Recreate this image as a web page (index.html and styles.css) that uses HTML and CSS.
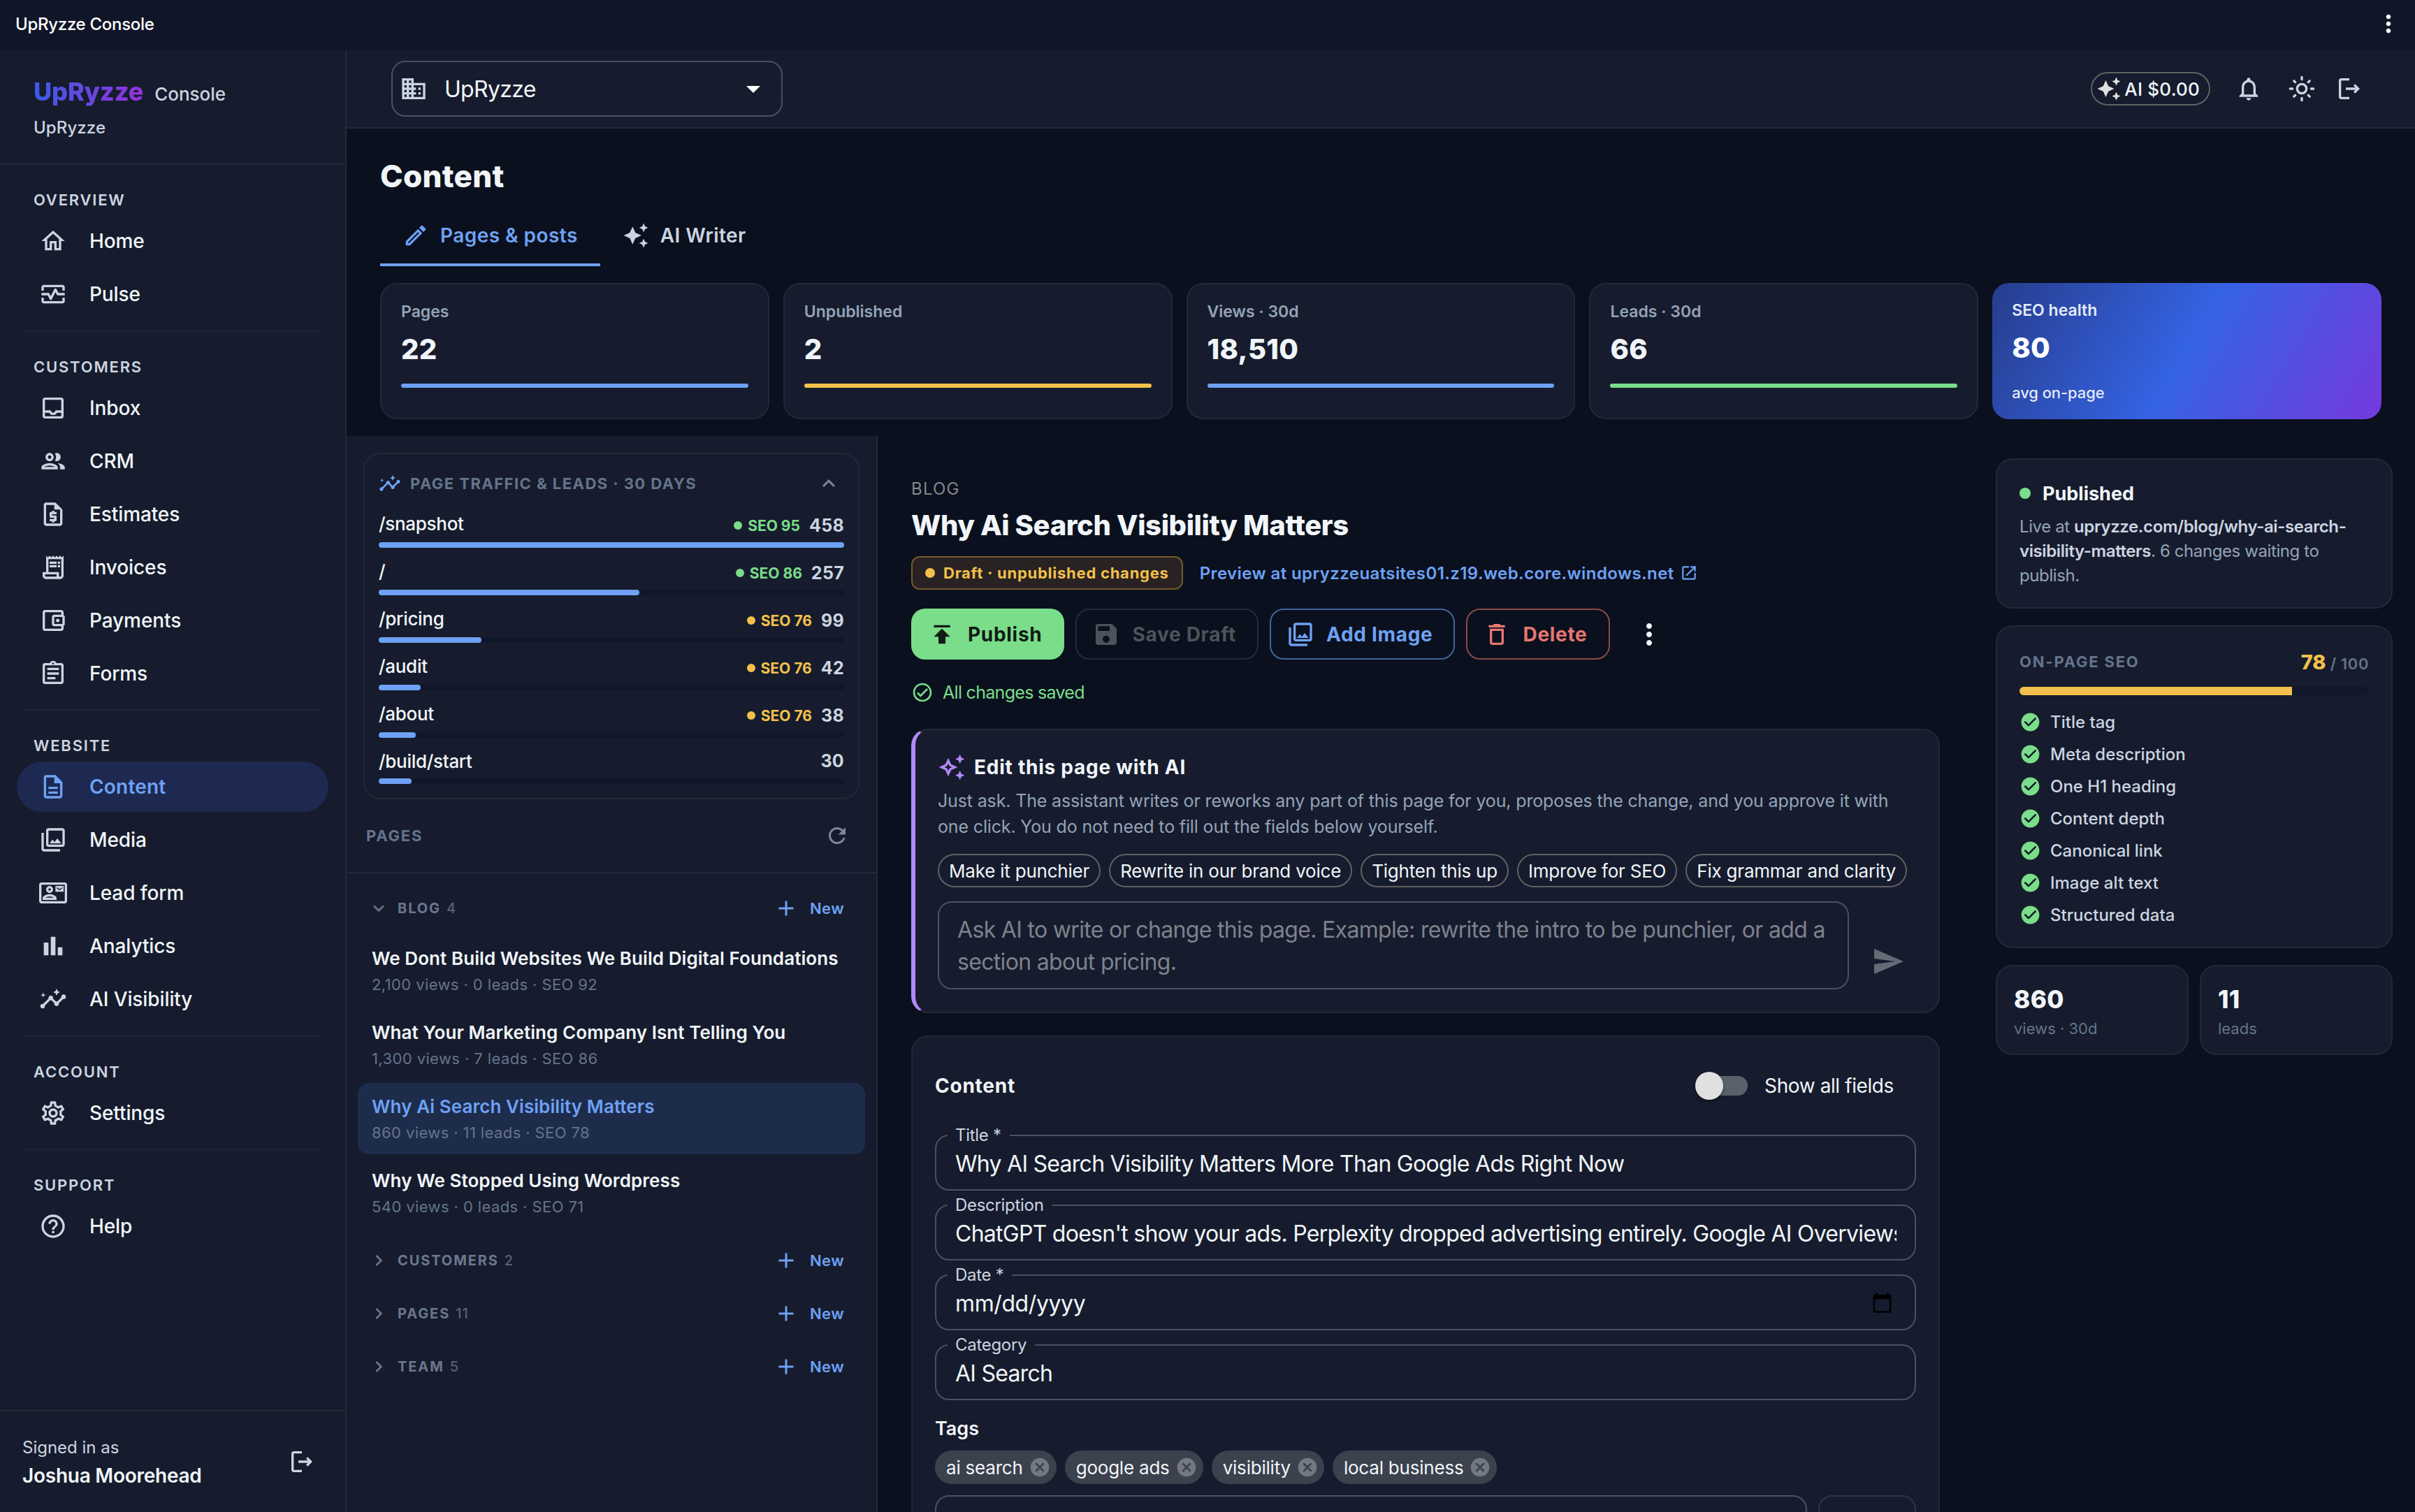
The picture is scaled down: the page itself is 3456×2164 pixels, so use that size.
FILE: index.html
```html
<!DOCTYPE html>
<html lang="en">
<head>
    <meta charset="UTF-8">
    <meta name="viewport" content="width=device-width, initial-scale=1.0">
    <title>UpRyzze Console</title>
    <link rel="stylesheet" href="styles.css">
</head>
<body>

    <!-- icon sprite -->
    <svg class="sprite">
        <symbol id="home" viewBox="0 0 24 24"><path d="M12 5.69l5 4.5V18h-2v-6H9v6H7v-7.81l5-4.5M12 3L2 12h3v8h6v-6h2v6h6v-8h3L12 3z"/></symbol>
        <symbol id="pulse" viewBox="0 0 24 24"><path d="M20 4H4c-1.1 0-2 .9-2 2v3h2V6h16v3h2V6c0-1.1-.9-2-2-2zm0 14H4v-3H2v3c0 1.1.9 2 2 2h16c1.1 0 2-.9 2-2v-3h-2v3z"/><path d="M14.89 7.55c-.34-.68-1.45-.68-1.79 0L10 13.76l-1.11-2.21c-.16-.34-.51-.55-.89-.55H2v2h5.38l1.72 3.45c.18.34.52.55.9.55s.72-.21.89-.55L14 10.24l1.11 2.21c.17.34.51.55.89.55h6v-2h-5.38l-1.73-3.45z"/></symbol>
        <symbol id="inbox" viewBox="0 0 24 24"><path d="M19 3H5c-1.1 0-2 .9-2 2v14c0 1.1.89 2 2 2h14c1.1 0 2-.9 2-2V5c0-1.1-.9-2-2-2zm0 16H5v-3h3.56c.69 1.19 1.97 2 3.45 2s2.75-.81 3.45-2H19v3zm0-5h-4.99c0 1.1-.9 2-2 2s-2-.9-2-2H5V5h14v9z"/></symbol>
        <symbol id="people" viewBox="0 0 24 24"><path d="M9 13.75c-2.34 0-7 1.17-7 3.5V19h14v-1.75c0-2.33-4.66-3.5-7-3.5zM4.34 17c.84-.58 2.87-1.25 4.66-1.25s3.82.67 4.66 1.25H4.34zM9 12c1.93 0 3.5-1.57 3.5-3.5S10.93 5 9 5 5.5 6.57 5.5 8.5 7.07 12 9 12zm0-5c.83 0 1.5.67 1.5 1.5S9.83 10 9 10s-1.5-.67-1.5-1.5S8.17 7 9 7zm7.04 6.81c1.16.84 1.96 1.96 1.96 3.44V19h4v-1.75c0-2.02-3.5-3.17-5.96-3.44zM15 12c1.93 0 3.5-1.57 3.5-3.5S16.93 5 15 5c-.54 0-1.04.13-1.5.35.63.89 1 1.98 1 3.15s-.37 2.26-1 3.15c.46.22.96.35 1.5.35z"/></symbol>
        <symbol id="quote" viewBox="0 0 24 24"><path d="M14 2H6c-1.1 0-1.99.9-1.99 2L4 20c0 1.1.89 2 1.99 2H18c1.1 0 2-.9 2-2V8l-6-6zM6 20V4h7v4h5v12H6zm5-1h2v-1h1c.55 0 1-.45 1-1v-3c0-.55-.45-1-1-1h-3v-1h4v-2h-2V9h-2v1h-1c-.55 0-1 .45-1 1v3c0 .55.45 1 1 1h3v1H9v2h2v1z"/></symbol>
        <symbol id="receipt" viewBox="0 0 24 24"><path d="M19.5 3.5L18 2l-1.5 1.5L15 2l-1.5 1.5L12 2l-1.5 1.5L9 2 7.5 3.5 6 2v14H3v3c0 1.66 1.34 3 3 3h12c1.66 0 3-1.34 3-3V2l-1.5 1.5zM15 20H6c-.55 0-1-.45-1-1v-1h10v2zm4-1c0 .55-.45 1-1 1s-1-.45-1-1v-3H8V5h11v14z"/><path d="M9 7h6v2H9zM16 7h2v2h-2zM9 10h6v2H9zM16 10h2v2h-2z"/></symbol>
        <symbol id="wallet" viewBox="0 0 24 24"><path d="M21 7.28V5c0-1.1-.9-2-2-2H5c-1.11 0-2 .9-2 2v14c0 1.1.89 2 2 2h14c1.1 0 2-.9 2-2v-2.28c.59-.35 1-.98 1-1.72V9c0-.74-.41-1.37-1-1.72zM20 9v6h-7V9h7zM5 19V5h14v2h-6c-1.1 0-2 .9-2 2v6c0 1.1.9 2 2 2h6v2H5z"/><circle cx="16" cy="12" r="1.5"/></symbol>
        <symbol id="forms" viewBox="0 0 24 24"><path d="M7 15h7v2H7zm0-4h10v2H7zm0-4h10v2H7zm12-4h-4.18C14.4 1.84 13.3 1 12 1c-1.3 0-2.4.84-2.82 2H5c-.14 0-.27.01-.4.04-.39.08-.74.28-1.01.55-.18.18-.33.4-.43.64-.1.23-.16.49-.16.77v14c0 .27.06.54.16.78s.25.45.43.64c.27.27.62.47 1.01.55.13.02.26.03.4.03h14c1.1 0 2-.9 2-2V5c0-1.1-.9-2-2-2zm-7-.25c.41 0 .75.34.75.75s-.34.75-.75.75-.75-.34-.75-.75.34-.75.75-.75zM19 19H5V5h14v14z"/></symbol>
        <symbol id="doc" viewBox="0 0 24 24"><path d="M8 16h8v2H8zm0-4h8v2H8zm6-10H6c-1.1 0-2 .9-2 2v16c0 1.1.89 2 1.99 2H18c1.1 0 2-.9 2-2V8l-6-6zm4 18H6V4h7v5h5v11z"/></symbol>
        <symbol id="media" viewBox="0 0 24 24"><path d="M20 4v12H8V4h12m0-2H8c-1.1 0-2 .9-2 2v12c0 1.1.9 2 2 2h12c1.1 0 2-.9 2-2V4c0-1.1-.9-2-2-2zm-8.5 9.67l1.69 2.26 2.48-3.1L19 15H9zM2 6v14c0 1.1.9 2 2 2h14v-2H4V6H2z"/></symbol>
        <symbol id="contact" viewBox="0 0 24 24"><path d="M22 3H2C.9 3 0 3.9 0 5v14c0 1.1.9 2 2 2h20c1.1 0 1.99-.9 1.99-2L24 5c0-1.1-.9-2-2-2zm0 16H2V5h20v14zM21 6h-7v5h7V6zm-1 2l-2.5 1.75L15 8V7l2.5 1.75L20 7v1zM9 12c1.65 0 3-1.35 3-3s-1.35-3-3-3-3 1.35-3 3 1.35 3 3 3zm0-4c.55 0 1 .45 1 1s-.45 1-1 1-1-.45-1-1 .45-1 1-1zm6 8.59c0-2.5-3.97-3.58-6-3.58s-6 1.08-6 3.58V18h12v-1.41zM5.48 16c.74-.5 2.22-1 3.52-1s2.77.49 3.52 1H5.48z"/></symbol>
        <symbol id="bars" viewBox="0 0 24 24"><path d="M4 9h4v11H4zm12 4h4v7h-4zm-6-9h4v16h-4z"/></symbol>
        <symbol id="insights" viewBox="0 0 24 24"><path d="M21 8c-1.45 0-2.26 1.44-1.93 2.51l-3.55 3.56c-.3-.09-.74-.09-1.04 0l-2.55-2.55C12.27 10.45 11.46 9 10 9c-1.45 0-2.27 1.44-1.93 2.52l-4.56 4.55C2.44 15.74 1 16.55 1 18c0 1.1.9 2 2 2 1.45 0 2.26-1.44 1.93-2.51l4.55-4.56c.3.09.74.09 1.04 0l2.55 2.55C12.73 16.55 13.54 18 15 18c1.45 0 2.27-1.44 1.93-2.52l3.56-3.55C21.56 12.26 23 11.45 23 10c0-1.1-.9-2-2-2z"/><path d="M15 9l.94-2.07L18 6l-2.06-.93L15 3l-.92 2.07L12 6l2.08.93zM3.5 11L4 9l2-.5L4 8l-.5-2L3 8l-2 .5L3 9z"/></symbol>
        <symbol id="settings" viewBox="0 0 24 24"><path d="M19.43 12.98c.04-.32.07-.64.07-.98 0-.34-.03-.66-.07-.98l2.11-1.65c.19-.15.24-.42.12-.64l-2-3.46c-.09-.16-.26-.25-.44-.25-.06 0-.12.01-.17.03l-2.49 1c-.52-.4-1.08-.73-1.69-.98l-.38-2.65C14.46 2.18 14.25 2 14 2h-4c-.25 0-.46.18-.49.42l-.38 2.65c-.61.25-1.17.59-1.69.98l-2.49-1c-.06-.02-.12-.03-.18-.03-.17 0-.34.09-.43.25l-2 3.46c-.13.22-.07.49.12.64l2.11 1.65c-.04.32-.07.65-.07.98 0 .33.03.66.07.98l-2.11 1.65c-.19.15-.24.42-.12.64l2 3.46c.09.16.26.25.44.25.06 0 .12-.01.17-.03l2.49-1c.52.4 1.08.73 1.69.98l.38 2.65c.03.24.24.42.49.42h4c.25 0 .46-.18.49-.42l.38-2.65c.61-.25 1.17-.59 1.69-.98l2.49 1c.06.02.12.03.18.03.17 0 .34-.09.43-.25l2-3.46c.12-.22.07-.49-.12-.64l-2.11-1.65zm-1.98-1.71c.04.31.05.52.05.73 0 .21-.02.43-.05.73l-.14 1.13.89.7 1.08.84-.7 1.21-1.27-.51-1.04-.42-.9.68c-.43.32-.84.56-1.25.73l-1.06.43-.16 1.13-.2 1.35h-1.4l-.19-1.35-.16-1.13-1.06-.43c-.43-.18-.83-.41-1.23-.71l-.91-.7-1.06.43-1.27.51-.7-1.21 1.08-.84.89-.7-.14-1.13c-.03-.31-.05-.54-.05-.74s.02-.43.05-.73l.14-1.13-.89-.7-1.08-.84.7-1.21 1.27.51 1.04.42.9-.68c.43-.32.84-.56 1.25-.73l1.06-.43.16-1.13.2-1.35h1.39l.19 1.35.16 1.13 1.06.43c.43.18.83.41 1.23.71l.91.7 1.06-.43 1.27-.51.7 1.21-1.07.85-.89.7.14 1.13zM12 8c-2.21 0-4 1.79-4 4s1.79 4 4 4 4-1.79 4-4-1.79-4-4-4zm0 6c-1.1 0-2-.9-2-2s.9-2 2-2 2 .9 2 2-.9 2-2 2z"/></symbol>
        <symbol id="help" viewBox="0 0 24 24"><path d="M11 18h2v-2h-2v2zm1-16C6.48 2 2 6.48 2 12s4.48 10 10 10 10-4.48 10-10S17.52 2 12 2zm0 18c-4.41 0-8-3.59-8-8s3.59-8 8-8 8 3.59 8 8-3.59 8-8 8zm0-14c-2.21 0-4 1.79-4 4h2c0-1.1.9-2 2-2s2 .9 2 2c0 2-3 1.75-3 5h2c0-2.25 3-2.5 3-5 0-2.21-1.79-4-4-4z"/></symbol>
        <symbol id="logout" viewBox="0 0 24 24"><path d="M17 8l-1.41 1.41L17.17 11H9v2h8.17l-1.58 1.58L17 16l4-4-4-4zM5 5h7V3H5c-1.1 0-2 .9-2 2v14c0 1.1.9 2 2 2h7v-2H5V5z"/></symbol>
        <symbol id="business" viewBox="0 0 24 24"><path d="M12 7V3H2v18h20V7H12zM6 19H4v-2h2v2zm0-4H4v-2h2v2zm0-4H4V9h2v2zm0-4H4V5h2v2zm4 12H8v-2h2v2zm0-4H8v-2h2v2zm0-4H8V9h2v2zm0-4H8V5h2v2zm10 12h-8v-2h2v-2h-2v-2h2v-2h-2V9h8v10zm-2-8h-2v2h2v-2zm0 4h-2v2h2v-2z"/></symbol>
        <symbol id="sparkle" viewBox="0 0 24 24"><path d="M19 9l1.25-2.75L23 5l-2.75-1.25L19 1l-1.25 2.75L15 5l2.75 1.25L19 9zm-7.5.5L9 4 6.5 9.5 1 12l5.5 2.5L9 20l2.5-5.5L17 12l-5.5-2.5zM19 15l-1.25 2.75L15 19l2.75 1.25L19 23l1.25-2.75L23 19l-2.75-1.25L19 15z"/></symbol>
        <symbol id="sparkle-outline" viewBox="0 0 24 24"><path d="M19 9l1.25-2.75L23 5l-2.75-1.25L19 1l-1.25 2.75L15 5l2.75 1.25L19 9zm0 6l-1.25 2.75L15 19l2.75 1.25L19 23l1.25-2.75L23 19l-2.75-1.25L19 15zm-7.5-5.5L9 4 6.5 9.5 1 12l5.5 2.5L9 20l2.5-5.5L17 12l-5.5-2.5zm-1.51 3.49L9 15.17l-.99-2.18L5.83 12l2.18-.99L9 8.83l.99 2.18 2.18.99-2.18.99z"/></symbol>
        <symbol id="edit" viewBox="0 0 24 24"><path d="M14.06 9.02l.92.92L5.92 19H5v-.92l9.06-9.06M17.66 3c-.25 0-.51.1-.7.29l-1.83 1.83 3.75 3.75 1.83-1.83c.39-.39.39-1.02 0-1.41l-2.34-2.34c-.2-.2-.45-.29-.71-.29zm-3.6 3.19L3 17.25V21h3.75L17.81 9.94l-3.75-3.75z"/></symbol>
        <symbol id="bell" viewBox="0 0 24 24"><path d="M12 22c1.1 0 2-.9 2-2h-4c0 1.1.9 2 2 2zm6-6v-5c0-3.07-1.63-5.64-4.5-6.32V4c0-.83-.67-1.5-1.5-1.5s-1.5.67-1.5 1.5v.68C7.64 5.36 6 7.92 6 11v5l-2 2v1h16v-1l-2-2zm-2 1H8v-6c0-2.48 1.51-4.5 4-4.5s4 2.02 4 4.5v6z"/></symbol>
        <symbol id="sun" viewBox="0 0 24 24"><g fill="none" stroke="currentColor" stroke-width="2" stroke-linecap="round"><circle cx="12" cy="12" r="4"/><path d="M12 2v2M12 20v2M2 12h2M20 12h2M5.3 5.3l1.1 1.1M17.6 17.6l1.1 1.1M5.3 18.7l1.1-1.1M17.6 6.4l1.1-1.1"/></g></symbol>
        <symbol id="caret" viewBox="0 0 24 24"><path d="M7 10l5 5 5-5z"/></symbol>
        <symbol id="up" viewBox="0 0 24 24"><path d="M12 8l-6 6 1.41 1.41L12 10.83l4.59 4.58L18 14z"/></symbol>
        <symbol id="down" viewBox="0 0 24 24"><path d="M16.59 8.59L12 13.17 7.41 8.59 6 10l6 6 6-6z"/></symbol>
        <symbol id="right" viewBox="0 0 24 24"><path d="M10 6L8.59 7.41 13.17 12l-4.58 4.59L10 18l6-6z"/></symbol>
        <symbol id="refresh" viewBox="0 0 24 24"><path d="M17.65 6.35C16.2 4.9 14.21 4 12 4c-4.42 0-7.99 3.58-7.99 8s3.57 8 7.99 8c3.73 0 6.84-2.55 7.73-6h-2.08c-.82 2.33-3.04 4-5.65 4-3.31 0-6-2.69-6-6s2.69-6 6-6c1.66 0 3.14.69 4.22 1.78L13 11h7V4l-2.35 2.35z"/></symbol>
        <symbol id="plus" viewBox="0 0 24 24"><path d="M19 13h-6v6h-2v-6H5v-2h6V5h2v6h6v2z"/></symbol>
        <symbol id="publish" viewBox="0 0 24 24"><path d="M5 4v2h14V4H5zm0 10h4v6h6v-6h4l-7-7-7 7z"/></symbol>
        <symbol id="save" viewBox="0 0 24 24"><path d="M17 3H5c-1.11 0-2 .9-2 2v14c0 1.1.89 2 2 2h14c1.1 0 2-.9 2-2V7l-4-4zm-5 16c-1.66 0-3-1.34-3-3s1.34-3 3-3 3 1.34 3 3-1.34 3-3 3zm3-10H5V5h10v4z"/></symbol>
        <symbol id="trash" viewBox="0 0 24 24"><path d="M6 19c0 1.1.9 2 2 2h8c1.1 0 2-.9 2-2V7H6v12zM8 9h8v10H8V9zm7.5-5l-1-1h-5l-1 1H5v2h14V4h-3.5z"/></symbol>
        <symbol id="more" viewBox="0 0 24 24"><path d="M12 8c1.1 0 2-.9 2-2s-.9-2-2-2-2 .9-2 2 .9 2 2 2zm0 2c-1.1 0-2 .9-2 2s.9 2 2 2 2-.9 2-2-.9-2-2-2zm0 6c-1.1 0-2 .9-2 2s.9 2 2 2 2-.9 2-2-.9-2-2-2z"/></symbol>
        <symbol id="open" viewBox="0 0 24 24"><path d="M19 19H5V5h7V3H5c-1.11 0-2 .9-2 2v14c0 1.1.89 2 2 2h14c1.1 0 2-.9 2-2v-7h-2v7zM14 3v2h3.59l-9.83 9.83 1.41 1.41L19 6.41V10h2V3h-7z"/></symbol>
        <symbol id="check-outline" viewBox="0 0 24 24"><path d="M16.59 7.58L10 14.17l-2.59-2.58L6 13l4 4 8-8zM12 2C6.48 2 2 6.48 2 12s4.48 10 10 10 10-4.48 10-10S17.52 2 12 2zm0 18c-4.42 0-8-3.58-8-8s3.58-8 8-8 8 3.58 8 8-3.58 8-8 8z"/></symbol>
        <symbol id="check" viewBox="0 0 24 24"><path d="M12 2C6.48 2 2 6.48 2 12s4.48 10 10 10 10-4.48 10-10S17.52 2 12 2zM9.29 16.29L5.7 12.7c-.39-.39-.39-1.02 0-1.41.39-.39 1.02-.39 1.41 0L10 14.17l6.88-6.88c.39-.39 1.02-.39 1.41 0 .39.39.39 1.02 0 1.41l-7.59 7.59c-.38.39-1.02.39-1.41 0z"/></symbol>
        <symbol id="send" viewBox="0 0 24 24"><path d="M2.01 21L23 12 2.01 3 2 10l15 2-15 2z"/></symbol>
        <symbol id="cancel" viewBox="0 0 24 24"><path d="M12 2C6.47 2 2 6.47 2 12s4.47 10 10 10 10-4.47 10-10S17.53 2 12 2zm5 13.59L15.59 17 12 13.41 8.41 17 7 15.59 10.59 12 7 8.41 8.41 7 12 10.59 15.59 7 17 8.41 13.41 12 17 15.59z"/></symbol>
        <symbol id="calendar" viewBox="0 0 24 24"><path d="M20 3h-1V1h-2v2H7V1H5v2H4c-1.1 0-2 .9-2 2v16c0 1.1.9 2 2 2h16c1.1 0 2-.9 2-2V5c0-1.1-.9-2-2-2zm0 18H4V8h16v13z"/></symbol>
    </svg>

    <div class="titlebar">
        <span>UpRyzze Console</span>
        <svg class="icon"><use href="#more"/></svg>
    </div>

    <div class="app">
        <aside class="sidebar">
            <div class="brand">
                <div class="brand-row"><span class="logo">UpRyzze</span><span class="console">Console</span></div>
                <div class="tenant">UpRyzze</div>
            </div>

            <nav class="nav">
                <div class="nav-group">
                    <div class="nav-label">OVERVIEW</div>
                    <a class="nav-item"><svg class="icon"><use href="#home"/></svg>Home</a>
                    <a class="nav-item"><svg class="icon"><use href="#pulse"/></svg>Pulse</a>
                </div>
                <div class="nav-group">
                    <div class="nav-label">CUSTOMERS</div>
                    <a class="nav-item"><svg class="icon"><use href="#inbox"/></svg>Inbox</a>
                    <a class="nav-item"><svg class="icon"><use href="#people"/></svg>CRM</a>
                    <a class="nav-item"><svg class="icon"><use href="#quote"/></svg>Estimates</a>
                    <a class="nav-item"><svg class="icon"><use href="#receipt"/></svg>Invoices</a>
                    <a class="nav-item"><svg class="icon"><use href="#wallet"/></svg>Payments</a>
                    <a class="nav-item"><svg class="icon"><use href="#forms"/></svg>Forms</a>
                </div>
                <div class="nav-group">
                    <div class="nav-label">WEBSITE</div>
                    <a class="nav-item active"><svg class="icon"><use href="#doc"/></svg>Content</a>
                    <a class="nav-item"><svg class="icon"><use href="#media"/></svg>Media</a>
                    <a class="nav-item"><svg class="icon"><use href="#contact"/></svg>Lead form</a>
                    <a class="nav-item"><svg class="icon"><use href="#bars"/></svg>Analytics</a>
                    <a class="nav-item"><svg class="icon"><use href="#insights"/></svg>AI Visibility</a>
                </div>
                <div class="nav-group">
                    <div class="nav-label">ACCOUNT</div>
                    <a class="nav-item"><svg class="icon"><use href="#settings"/></svg>Settings</a>
                </div>
                <div class="nav-group">
                    <div class="nav-label">SUPPORT</div>
                    <a class="nav-item"><svg class="icon"><use href="#help"/></svg>Help</a>
                </div>
            </nav>

            <div class="user">
                <div>
                    <div class="user-hint">Signed in as</div>
                    <div class="user-name">Joshua Moorehead</div>
                </div>
                <svg class="icon"><use href="#logout"/></svg>
            </div>
        </aside>

        <div class="page">
            <header class="topbar">
                <div class="site-select">
                    <svg class="icon"><use href="#business"/></svg>
                    <span>UpRyzze</span>
                    <svg class="icon caret"><use href="#caret"/></svg>
                </div>
                <div class="topbar-actions">
                    <div class="cost"><svg class="icon"><use href="#sparkle"/></svg>AI $0.00</div>
                    <svg class="icon bell"><use href="#bell"/></svg>
                    <svg class="icon sun"><use href="#sun"/></svg>
                    <svg class="icon"><use href="#logout"/></svg>
                </div>
            </header>

            <section class="head">
                <h1>Content</h1>
                <div class="tabs">
                    <a class="tab active"><svg class="icon"><use href="#edit"/></svg>Pages &amp; posts</a>
                    <a class="tab"><svg class="icon"><use href="#sparkle"/></svg>AI Writer</a>
                </div>
                <div class="stats">
                    <div class="stat"><div class="stat-label">Pages</div><div class="stat-value">22</div><div class="stat-bar blue"></div></div>
                    <div class="stat"><div class="stat-label">Unpublished</div><div class="stat-value">2</div><div class="stat-bar amber"></div></div>
                    <div class="stat"><div class="stat-label">Views · 30d</div><div class="stat-value">18,510</div><div class="stat-bar blue"></div></div>
                    <div class="stat"><div class="stat-label">Leads · 30d</div><div class="stat-value">66</div><div class="stat-bar green"></div></div>
                    <div class="stat health"><div class="stat-label">SEO health</div><div class="stat-value">80</div><div class="stat-note">avg on-page</div></div>
                </div>
            </section>

            <div class="workspace">
                <div class="pages-panel">
                    <div class="traffic">
                        <div class="traffic-head">
                            <svg class="icon"><use href="#insights"/></svg>
                            <span>PAGE TRAFFIC &amp; LEADS · 30 DAYS</span>
                            <svg class="icon toggle"><use href="#up"/></svg>
                        </div>
                        <div class="traffic-row">
                            <div class="traffic-line"><span class="path">/snapshot</span><span class="seo good">SEO 95</span><b>458</b></div>
                            <div class="meter"><i style="width: 100%"></i></div>
                        </div>
                        <div class="traffic-row">
                            <div class="traffic-line"><span class="path">/</span><span class="seo good">SEO 86</span><b>257</b></div>
                            <div class="meter"><i style="width: 56%"></i></div>
                        </div>
                        <div class="traffic-row">
                            <div class="traffic-line"><span class="path">/pricing</span><span class="seo warn">SEO 76</span><b>99</b></div>
                            <div class="meter"><i style="width: 22%"></i></div>
                        </div>
                        <div class="traffic-row">
                            <div class="traffic-line"><span class="path">/audit</span><span class="seo warn">SEO 76</span><b>42</b></div>
                            <div class="meter"><i style="width: 9%"></i></div>
                        </div>
                        <div class="traffic-row">
                            <div class="traffic-line"><span class="path">/about</span><span class="seo warn">SEO 76</span><b>38</b></div>
                            <div class="meter"><i style="width: 8%"></i></div>
                        </div>
                        <div class="traffic-row plain">
                            <div class="traffic-line"><span class="path">/build/start</span><b>30</b></div>
                            <div class="meter"><i style="width: 7%"></i></div>
                        </div>
                    </div>

                    <div class="panel-head"><span>PAGES</span><svg class="icon"><use href="#refresh"/></svg></div>

                    <div class="groups">
                        <div class="group"><svg class="icon"><use href="#down"/></svg><span>BLOG</span><em>4</em><a class="new"><svg class="icon"><use href="#plus"/></svg>New</a></div>
                        <div class="post"><div class="post-title">We Dont Build Websites We Build Digital Foundations</div><div class="post-meta">2,100 views · 0 leads · SEO 92</div></div>
                        <div class="post"><div class="post-title">What Your Marketing Company Isnt Telling You</div><div class="post-meta">1,300 views · 7 leads · SEO 86</div></div>
                        <div class="post active"><div class="post-title">Why Ai Search Visibility Matters</div><div class="post-meta">860 views · 11 leads · SEO 78</div></div>
                        <div class="post"><div class="post-title">Why We Stopped Using Wordpress</div><div class="post-meta">540 views · 0 leads · SEO 71</div></div>
                        <div class="group closed-first"><svg class="icon"><use href="#right"/></svg><span>CUSTOMERS</span><em>2</em><a class="new"><svg class="icon"><use href="#plus"/></svg>New</a></div>
                        <div class="group"><svg class="icon"><use href="#right"/></svg><span>PAGES</span><em>11</em><a class="new"><svg class="icon"><use href="#plus"/></svg>New</a></div>
                        <div class="group"><svg class="icon"><use href="#right"/></svg><span>TEAM</span><em>5</em><a class="new"><svg class="icon"><use href="#plus"/></svg>New</a></div>
                    </div>
                </div>

                <main class="editor">
                    <div class="overline">BLOG</div>
                    <h2>Why Ai Search Visibility Matters</h2>
                    <div class="status-row">
                        <span class="draft">Draft · unpublished changes</span>
                        <a class="preview">Preview at upryzzeuatsites01.z19.web.core.windows.net<svg class="icon"><use href="#open"/></svg></a>
                    </div>
                    <div class="actions">
                        <button class="btn publish"><svg class="icon"><use href="#publish"/></svg>Publish</button>
                        <button class="btn save"><svg class="icon"><use href="#save"/></svg>Save Draft</button>
                        <button class="btn image"><svg class="icon"><use href="#media"/></svg>Add Image</button>
                        <button class="btn delete"><svg class="icon"><use href="#trash"/></svg>Delete</button>
                        <svg class="icon more"><use href="#more"/></svg>
                    </div>
                    <div class="saved"><svg class="icon"><use href="#check-outline"/></svg>All changes saved</div>

                    <div class="card ai">
                        <div class="ai-title"><svg class="icon"><use href="#sparkle-outline"/></svg>Edit this page with AI</div>
                        <p>Just ask. The assistant writes or reworks any part of this page for you, proposes the change, and you approve it with<br>one click. You do not need to fill out the fields below yourself.</p>
                        <div class="chips">
                            <span class="chip">Make it punchier</span>
                            <span class="chip">Rewrite in our brand voice</span>
                            <span class="chip">Tighten this up</span>
                            <span class="chip">Improve for SEO</span>
                            <span class="chip">Fix grammar and clarity</span>
                        </div>
                        <div class="ask">
                            <div class="ask-box">Ask AI to write or change this page. Example: rewrite the intro to be punchier, or add a<br>section about pricing.</div>
                            <div class="send"><svg class="icon"><use href="#send"/></svg></div>
                        </div>
                    </div>

                    <div class="card form">
                        <div class="form-head">
                            <span class="form-title">Content</span>
                            <span class="switch"></span>
                            <span class="switch-label">Show all fields</span>
                        </div>
                        <fieldset><legend>Title *</legend><div class="value">Why AI Search Visibility Matters More Than Google Ads Right Now</div></fieldset>
                        <fieldset><legend>Description</legend><div class="value">ChatGPT doesn't show your ads. Perplexity dropped advertising entirely. Google AI Overviews</div></fieldset>
                        <fieldset><legend>Date *</legend><div class="value date">mm/dd/yyyy<svg class="icon"><use href="#calendar"/></svg></div></fieldset>
                        <fieldset><legend>Category</legend><div class="value">AI Search</div></fieldset>
                        <div class="tags-label">Tags</div>
                        <div class="tags">
                            <span class="tag">ai search<svg class="icon"><use href="#cancel"/></svg></span>
                            <span class="tag">google ads<svg class="icon"><use href="#cancel"/></svg></span>
                            <span class="tag">visibility<svg class="icon"><use href="#cancel"/></svg></span>
                            <span class="tag">local business<svg class="icon"><use href="#cancel"/></svg></span>
                        </div>
                        <div class="tag-entry"><div class="tag-input"></div><div class="tag-add"></div></div>
                    </div>
                </main>

                <aside class="rail">
                    <div class="card live">
                        <div class="live-title">Published</div>
                        <p>Live at <b>upryzze.com/blog/why-ai-search-<br>visibility-matters</b>. 6 changes waiting to<br>publish.</p>
                    </div>
                    <div class="card score">
                        <div class="score-head"><span>ON-PAGE SEO</span><span class="total"><b>78</b> / 100</span></div>
                        <div class="score-bar"><i style="width: 78%"></i></div>
                        <ul>
                            <li><svg class="icon"><use href="#check"/></svg>Title tag</li>
                            <li><svg class="icon"><use href="#check"/></svg>Meta description</li>
                            <li><svg class="icon"><use href="#check"/></svg>One H1 heading</li>
                            <li><svg class="icon"><use href="#check"/></svg>Content depth</li>
                            <li><svg class="icon"><use href="#check"/></svg>Canonical link</li>
                            <li><svg class="icon"><use href="#check"/></svg>Image alt text</li>
                            <li><svg class="icon"><use href="#check"/></svg>Structured data</li>
                        </ul>
                    </div>
                    <div class="minis">
                        <div class="card mini"><b>860</b><span>views · 30d</span></div>
                        <div class="card mini"><b>11</b><span>leads</span></div>
                    </div>
                </aside>
            </div>
        </div>
    </div>

</body>
</html>
```
FILE: styles.css
```css
:root {
    --bg: #0a101d;
    --paper: #161c2d;
    --line: #222835;
    --text: #f1f5f9;
    --soft: #cbd5e1;
    --muted: #94a3b8;
    --faint: #64748b;
    --blue: #6ea1f5;
    --green: #7add8a;
    --amber: #f3c04b;
    --red: #e77672;
    --purple: #b388f9;
}
* {
    box-sizing: border-box;
}
body {
    margin: 0;
    height: 2164px;
    overflow: hidden;
    display: flex;
    flex-direction: column;
    background: var(--bg);
    color: var(--text);
    font-family: Inter, "Liberation Sans", sans-serif;
    font-size: 28px;
}
h1, h2, p, ul, fieldset {
    margin: 0;
    padding: 0;
}
.sprite {
    display: none;
}
.icon {
    width: 40px;
    height: 40px;
    fill: currentColor;
    flex: none;
    display: block;
}

/* window bar */
.titlebar {
    height: 72px;
    flex: none;
    display: flex;
    align-items: center;
    justify-content: space-between;
    padding: 0 18px 4px 22px;
    background: #101628;
    color: #fff;
    font-size: 24px;
    font-weight: 500;
    letter-spacing: -0.3px;
}
.app {
    flex: 1;
    min-height: 0;
    display: flex;
}

/* sidebar */
.sidebar {
    width: 496px;
    flex: none;
    display: flex;
    flex-direction: column;
    background: var(--paper);
    border-right: 2px solid var(--line);
}
.brand {
    height: 164px;
    padding: 35px 48px 0;
    border-bottom: 2px solid var(--line);
}
.brand-row {
    display: flex;
    align-items: baseline;
    gap: 16px;
    line-height: 48px;
}
.logo {
    font-size: 36px;
    font-weight: 800;
    letter-spacing: -0.1px;
    background: linear-gradient(90deg, #3b5be6, #9333dd);
    -webkit-background-clip: text;
    background-clip: text;
    color: transparent;
}
.console, .tenant {
    font-size: 26px;
    font-weight: 500;
    color: var(--soft);
}
.tenant {
    font-size: 24px;
    line-height: 40px;
    margin-top: 4px;
    letter-spacing: 0.1px;
}
.nav {
    flex: 1;
    padding: 0 24px;
}
.nav-group + .nav-group::before {
    content: "";
    display: block;
    height: 2px;
    margin: 15.5px 8px 0;
    background: #1d2333;
}
.nav-label {
    padding: 34px 24px 7px;
    line-height: 32px;
    font-size: 22px;
    font-weight: 600;
    letter-spacing: 1.8px;
    color: var(--soft);
}
.nav-item {
    display: flex;
    align-items: center;
    gap: 32px;
    height: 72px;
    padding: 0 32px;
    border-radius: 36px;
    font-weight: 500;
    letter-spacing: -0.1px;
}
.nav-item + .nav-item {
    margin-top: 4px;
}
.nav-item .icon {
    color: var(--soft);
}
.nav-item.active {
    background: #1d2950;
    color: var(--blue);
    font-weight: 600;
    letter-spacing: 0.2px;
}
.nav-item.active .icon {
    color: var(--blue);
}
.user {
    height: 146px;
    display: flex;
    align-items: center;
    justify-content: space-between;
    padding: 0 42px 0 32px;
    border-top: 2px solid var(--line);
}
.user-hint {
    font-size: 24px;
    line-height: 40px;
    color: var(--soft);
}
.user-name {
    line-height: 40px;
    font-weight: 600;
    letter-spacing: -0.25px;
}
.user .icon {
    color: var(--soft);
}

/* top bar */
.page {
    flex: 1;
    min-width: 0;
    display: flex;
    flex-direction: column;
}
.topbar {
    height: 112px;
    flex: none;
    display: flex;
    align-items: center;
    justify-content: space-between;
    padding: 0 74px 0 64px;
    background: var(--paper);
    border-bottom: 2px solid var(--line);
}
.site-select {
    width: 560px;
    height: 80px;
    display: flex;
    align-items: center;
    padding: 0 20px 0 10px;
    border: 2px solid #4a505e;
    border-radius: 20px;
    font-size: 32px;
    letter-spacing: -0.7px;
}
.site-select .icon {
    color: var(--soft);
}
.site-select span {
    flex: 1;
    margin-left: 24px;
}
.site-select .caret {
    width: 48px;
    height: 48px;
    margin-right: -4px;
    color: #fff;
}
.topbar-actions {
    display: flex;
    align-items: center;
    color: var(--soft);
}
.cost {
    height: 48px;
    display: flex;
    align-items: center;
    gap: 4px;
    padding: 0 13px 0 6px;
    margin-right: 35px;
    border: 2px solid #616161;
    border-radius: 24px;
    font-size: 26px;
    font-weight: 500;
    letter-spacing: 0.2px;
    color: var(--text);
}
.cost .icon {
    width: 36px;
    height: 36px;
    color: #e0e0e0;
}
.bell {
    margin-right: 36px;
}
.sun {
    margin-right: 28px;
}

/* page head */
.head {
    height: 440px;
    flex: none;
    padding: 40px 48px 0;
}
h1 {
    font-size: 44px;
    font-weight: 800;
    line-height: 56px;
    letter-spacing: 0.3px;
}
.tabs {
    display: flex;
    margin-top: 14px;
}
.tab {
    height: 87px;
    display: flex;
    align-items: center;
    gap: 16px;
    padding: 3px 32px 0;
    color: var(--soft);
    font-weight: 600;
    letter-spacing: 0.45px;
    border-bottom: 4px solid transparent;
}
.tab .icon {
    width: 38px;
    height: 38px;
}
.tab.active {
    color: var(--blue);
    border-color: var(--blue);
}
.stats {
    display: grid;
    grid-template-columns: repeat(5, 1fr);
    gap: 20px;
    margin-top: 24px;
}
.stat {
    height: 195px;
    padding: 22px 28px 0;
    background: var(--paper);
    border: 2px solid var(--line);
    border-radius: 24px;
}
.stat-label {
    font-size: 23px;
    font-weight: 600;
    line-height: 34px;
    color: var(--muted);
}
.stat-value {
    font-size: 40px;
    font-weight: 800;
    line-height: 48px;
    letter-spacing: 0.3px;
    margin-top: 13px;
}
.stat-bar {
    height: 6px;
    margin-top: 25px;
    border-radius: 3px;
}
.blue {
    background: var(--blue);
}
.amber {
    background: var(--amber);
}
.green {
    background: var(--green);
}
.health {
    border: 0;
    background: linear-gradient(120deg, #263d8c, #3563e4 50%, #7539dd);
}
.health .stat-label, .health .stat-note {
    color: #e3e9f8;
}
.health .stat-value {
    color: #fff;
}
.stat-note {
    margin-top: 24px;
    font-size: 22px;
    font-weight: 500;
    line-height: 32px;
    letter-spacing: -0.1px;
}

/* page list */
.workspace {
    flex: 1;
    min-height: 0;
    display: flex;
    align-items: flex-start;
}
.pages-panel {
    width: 760px;
    height: 1540px;
    flex: none;
    background: var(--paper);
    border-right: 2px solid var(--line);
    padding-top: 24px;
}
.traffic {
    height: 496px;
    margin: 0 24px;
    padding: 20px 20px 0;
    border: 2px solid var(--line);
    border-radius: 24px;
}
.traffic-head {
    height: 44px;
    display: flex;
    align-items: center;
    margin-bottom: 19px;
    font-size: 22px;
    font-weight: 700;
    letter-spacing: 1.45px;
    color: var(--faint);
}
.traffic-head .icon {
    width: 32px;
    height: 32px;
    color: var(--blue);
}
.traffic-head span {
    flex: 1;
    margin-left: 13px;
}
.traffic-head .toggle {
    width: 36px;
    height: 36px;
    margin-right: 4px;
    color: #7b879b;
}
.traffic-row {
    height: 68px;
}
.traffic-line {
    display: flex;
    align-items: center;
    height: 34px;
    margin-bottom: 9px;
}
.plain .traffic-line {
    height: 32px;
}
.path {
    flex: 1;
    padding-bottom: 2px;
    font-size: 26px;
    font-weight: 500;
    letter-spacing: -0.3px;
}
.plain .path {
    padding-bottom: 0;
}
.seo {
    display: flex;
    align-items: center;
    gap: 8px;
    padding-top: 4px;
    font-size: 21px;
    font-weight: 700;
}
.seo::before {
    content: "";
    width: 12px;
    height: 12px;
    border-radius: 50%;
    background: currentColor;
}
.good {
    color: var(--green);
}
.warn {
    color: var(--amber);
}
.traffic-line b {
    margin-left: 13px;
    padding-top: 4px;
    font-size: 25px;
    font-weight: 700;
    letter-spacing: 0.3px;
    color: var(--soft);
}
.plain b {
    padding-top: 0;
}
.meter {
    height: 8px;
    border-radius: 4px;
    background: #11172a;
}
.meter i {
    display: block;
    height: 8px;
    border-radius: 4px;
    background: var(--blue);
}
.panel-head {
    height: 106px;
    display: flex;
    align-items: center;
    justify-content: space-between;
    padding: 0 38px 0 28px;
    border-bottom: 2px solid var(--line);
    font-size: 22px;
    font-weight: 700;
    letter-spacing: 1.8px;
    color: var(--faint);
}
.panel-head .icon {
    width: 36px;
    height: 36px;
    color: #7b879b;
}
.groups {
    padding: 12px 16px 0;
}
.group {
    height: 76px;
    display: flex;
    align-items: center;
    padding: 0 30px 0 14px;
    font-size: 20px;
    font-weight: 700;
    letter-spacing: 1.9px;
    color: #6b778d;
}
.group .icon {
    width: 32px;
    height: 32px;
}
.group span {
    margin-left: 11px;
}
.group em {
    flex: 1;
    margin-left: 8px;
    font-style: normal;
    font-weight: 500;
    letter-spacing: 1px;
    color: #566277;
}
.closed-first {
    margin-top: 8px;
}
.new {
    display: flex;
    align-items: center;
    gap: 16px;
    font-size: 22px;
    font-weight: 600;
    letter-spacing: 0.4px;
    color: var(--blue);
}
.new .icon {
    width: 36px;
    height: 36px;
}
.post {
    height: 102px;
    margin-bottom: 4px;
    padding: 15px 20px 0;
    border-radius: 16px;
    white-space: nowrap;
}
.post-title {
    font-size: 26px;
    font-weight: 600;
    line-height: 38px;
    letter-spacing: 0.07px;
}
.post-meta {
    font-size: 22px;
    line-height: 36px;
    letter-spacing: 0.4px;
    color: var(--faint);
}
.post.active {
    background: #1e2c4c;
}
.post.active .post-title {
    color: var(--blue);
}

/* editor */
.editor {
    width: 1520px;
    flex: none;
    padding: 52px 0 0 48px;
    white-space: nowrap;
}
.overline {
    font-size: 24px;
    line-height: 48px;
    letter-spacing: 1.2px;
    color: #84878e;
}
h2 {
    font-size: 40px;
    font-weight: 800;
    line-height: 56px;
    letter-spacing: -0.4px;
}
.status-row {
    display: flex;
    align-items: center;
    gap: 24px;
    margin-top: 16px;
}
.draft {
    height: 48px;
    display: flex;
    align-items: center;
    gap: 12px;
    padding: 0 18px;
    border: 2px solid #74592b;
    border-radius: 12px;
    background: #282223;
    color: var(--amber);
    font-size: 22px;
    font-weight: 700;
    letter-spacing: 0.75px;
}
.draft::before {
    content: "";
    width: 14px;
    height: 14px;
    border-radius: 50%;
    background: currentColor;
}
.preview {
    display: flex;
    align-items: center;
    gap: 8px;
    font-size: 24px;
    font-weight: 600;
    letter-spacing: 0.4px;
    color: var(--blue);
}
.preview .icon {
    width: 26px;
    height: 26px;
}
.actions {
    display: flex;
    align-items: center;
    gap: 16px;
    margin-top: 27px;
}
.btn {
    height: 73px;
    display: flex;
    align-items: center;
    gap: 17px;
    padding: 0 30px 0 22px;
    border: 2px solid transparent;
    border-radius: 20px;
    background: none;
    font-family: inherit;
    font-size: 28px;
    font-weight: 700;
    letter-spacing: 0.7px;
}
.publish {
    background: var(--green);
    color: #101b14;
}
.btn.save {
    border-color: #262b37;
    color: #4e525c;
}
.btn.image {
    border-color: #43639c;
    color: var(--blue);
}
.btn.delete {
    border-color: #8b4a4d;
    color: var(--red);
}
.more {
    width: 48px;
    height: 48px;
    margin-left: 16px;
}
.saved {
    display: flex;
    align-items: center;
    gap: 13px;
    height: 36px;
    margin-top: 29px;
    font-size: 25px;
    letter-spacing: -0.7px;
    color: var(--green);
}
.saved .icon {
    width: 32px;
    height: 32px;
}
.card {
    background: var(--paper);
    border: 2px solid var(--line);
    border-radius: 24px;
}
.ai {
    height: 407px;
    margin-top: 34px;
    padding: 31px 32px 0;
    border-left: 6px solid var(--purple);
}
.ai-title {
    height: 44px;
    display: flex;
    align-items: center;
    gap: 12px;
    font-weight: 700;
    letter-spacing: 0.75px;
}
.ai-title .icon {
    color: var(--purple);
}
.ai p {
    margin-top: 8px;
    font-size: 25px;
    line-height: 37px;
    letter-spacing: -0.15px;
    color: var(--muted);
}
.chips {
    display: flex;
    gap: 12px;
    margin-top: 20px;
}
.chip {
    height: 48px;
    display: flex;
    align-items: center;
    padding: 0 14px;
    border: 2px solid #616161;
    border-radius: 24px;
    font-size: 26px;
    letter-spacing: -0.21px;
}
.ask {
    display: flex;
    align-items: flex-end;
    gap: 16px;
    margin-top: 20px;
}
.ask-box {
    flex: 1;
    min-width: 0;
    height: 126px;
    padding: 16px 26px;
    border: 2px solid #4a505e;
    border-radius: 20px;
    font-size: 32px;
    line-height: 46px;
    letter-spacing: -0.67px;
    color: #7d828c;
}
.send {
    width: 80px;
    height: 80px;
    display: flex;
    align-items: center;
    justify-content: center;
    color: #656a75;
}
.send .icon {
    width: 48px;
    height: 48px;
}
.form {
    height: 760px;
    margin-top: 32px;
    padding: 32px 32px 0;
}
.form-head {
    height: 76px;
    display: flex;
    align-items: center;
    padding-right: 32px;
    margin-bottom: 21px;
}
.form-title {
    flex: 1;
    font-weight: 700;
    letter-spacing: 0.75px;
}
.switch {
    width: 69px;
    height: 28px;
    margin-right: 24px;
    border-radius: 14px;
    background: #5b606d;
    display: flex;
    align-items: center;
}
.switch::before {
    content: "";
    width: 40px;
    height: 40px;
    flex: none;
    margin-left: -6px;
    border-radius: 50%;
    background: #e0e0e0;
    box-shadow: 0 2px 4px rgba(0, 0, 0, 0.4);
}
.switch-label {
    letter-spacing: -0.4px;
}
fieldset {
    min-width: 0;
    height: 91px;
    margin-bottom: 9px;
    padding: 0 26px 0 16px;
    border: 2px solid #4a505e;
    border-radius: 20px;
}
legend {
    padding: 0 12px 0 11px;
    font-size: 24px;
    line-height: 24px;
    letter-spacing: -0.3px;
    color: var(--soft);
}
.value {
    height: 58px;
    margin-left: 11px;
    overflow: hidden;
    font-size: 32px;
    line-height: 58px;
    letter-spacing: -0.73px;
}
.date {
    display: flex;
    align-items: center;
    justify-content: space-between;
    padding-right: 5px;
    letter-spacing: -0.4px;
}
.date .icon {
    width: 31px;
    height: 31px;
    margin-top: -4px;
    color: #000;
}
.tags-label {
    margin-top: 21px;
    font-size: 27px;
    font-weight: 600;
    line-height: 40px;
}
.tags {
    display: flex;
    gap: 12px;
    margin-top: 11px;
}
.tag {
    height: 48px;
    display: flex;
    align-items: center;
    gap: 8px;
    padding: 0 8px 0 16px;
    border-radius: 24px;
    background: #3c414e;
    font-size: 26px;
    letter-spacing: -0.21px;
}
.tag .icon {
    width: 32px;
    height: 32px;
    color: #737882;
}
.tag-entry {
    display: flex;
    gap: 16px;
    margin-top: 16px;
}
.tag-input {
    flex: 1;
    height: 80px;
    border: 2px solid #4a505e;
    border-radius: 20px;
}
.tag-add {
    width: 140px;
    height: 80px;
    border: 2px solid #2f3544;
    border-radius: 20px;
}

/* right rail */
.rail {
    width: 568px;
    margin: 32px 0 0 80px;
    display: flex;
    flex-direction: column;
    gap: 24px;
}
.live {
    height: 215px;
    padding: 28px 32px 0;
    white-space: nowrap;
}
.live-title {
    height: 40px;
    display: flex;
    align-items: center;
    gap: 17px;
    font-size: 27px;
    font-weight: 700;
}
.live-title::before {
    content: "";
    width: 16px;
    height: 16px;
    border-radius: 50%;
    background: var(--green);
}
.live p {
    margin-top: 10px;
    font-size: 24px;
    line-height: 35px;
    letter-spacing: -0.4px;
    color: var(--muted);
}
.live b {
    font-weight: 600;
    color: var(--soft);
}
.score {
    height: 462px;
    padding: 28px 32px 0;
}
.score-head {
    height: 44px;
    display: flex;
    align-items: center;
    justify-content: space-between;
    font-size: 22px;
    font-weight: 700;
    letter-spacing: 1.8px;
    color: var(--faint);
}
.total {
    font-weight: 600;
    letter-spacing: 0.6px;
}
.score-head b {
    font-size: 29px;
    font-weight: 800;
    letter-spacing: 0;
    color: var(--amber);
}
.score-bar {
    height: 12px;
    margin-top: 14px;
    border-radius: 6px;
    overflow: hidden;
    background: #11172a;
}
.score-bar i {
    display: block;
    height: 12px;
    background: var(--amber);
}
.score ul {
    margin-top: 15px;
    list-style: none;
}
.score li {
    height: 46px;
    display: flex;
    align-items: center;
    gap: 13px;
    font-size: 24px;
    font-weight: 500;
    color: var(--soft);
}
.score li .icon {
    width: 31px;
    height: 31px;
    color: var(--green);
}
.minis {
    display: grid;
    grid-template-columns: 1fr 1fr;
    gap: 16px;
}
.mini {
    height: 129px;
    display: flex;
    flex-direction: column;
    padding: 25px 24px 0;
}
.mini b {
    font-size: 35px;
    font-weight: 800;
    line-height: 44px;
    letter-spacing: 0.4px;
}
.mini span {
    margin-top: 4px;
    font-size: 22px;
    line-height: 32px;
    color: var(--faint);
}
```
